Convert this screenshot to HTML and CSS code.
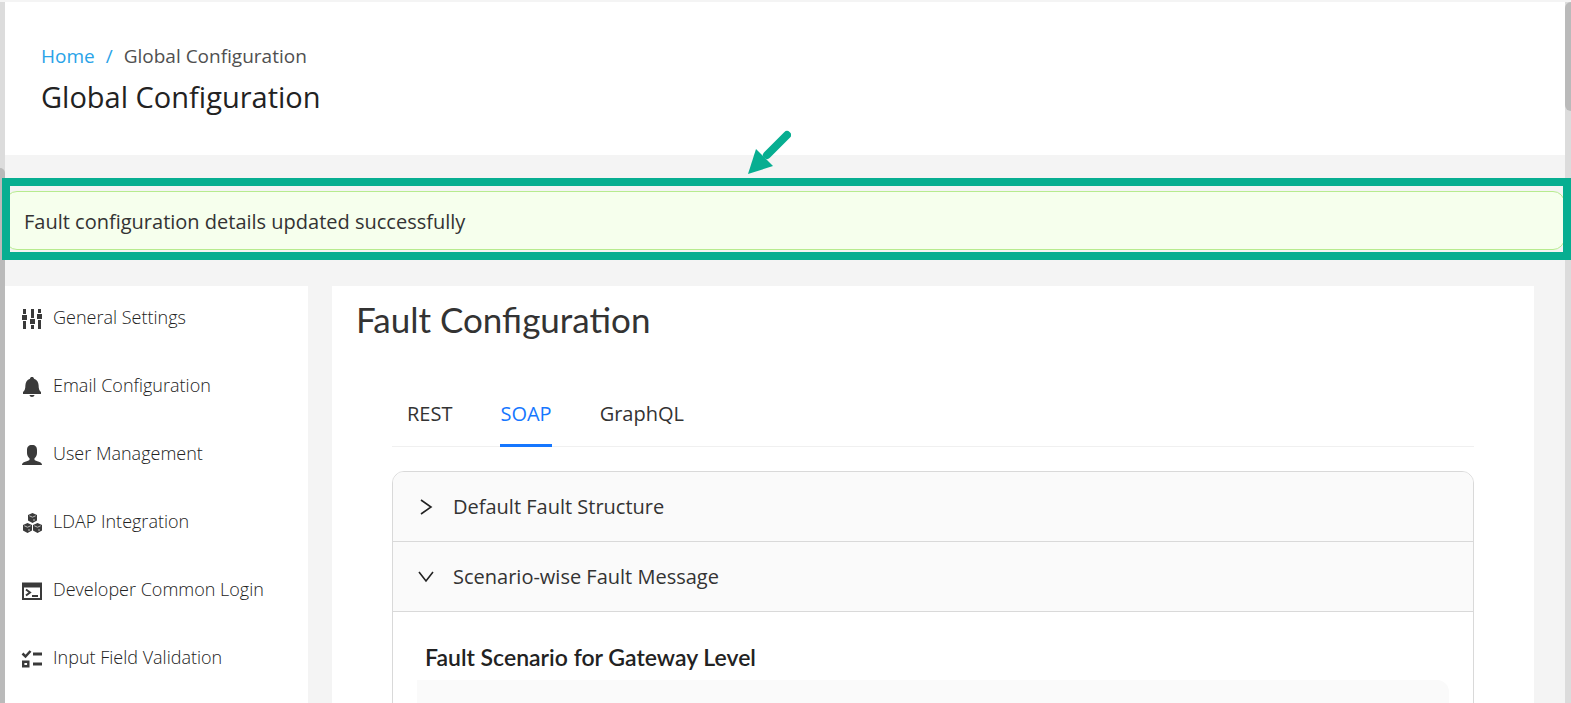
FILE: index.html
```html
<!DOCTYPE html>
<html lang="en">
<head>
<meta charset="UTF-8">
<meta name="viewport" content="width=device-width, initial-scale=1.0">
<title>Global Configuration</title>
<link rel="stylesheet" href="styles.css">
</head>
<body>

<div class="page">
    <!-- Left scroll rail -->
    <div class="rail rail-left"><div class="thumb"></div></div>

    <div class="content">
        <!-- Page header -->
        <header class="page-header">
            <nav class="breadcrumb" aria-label="Breadcrumb">
                <a href="#">Home</a>
                <span class="separator">/</span>
                <span>Global Configuration</span>
            </nav>
            <h1>Global Configuration</h1>
        </header>

        <!-- Success message -->
        <div class="alert-area">
            <div class="alert" role="status">Fault configuration details updated successfully</div>
            <div class="highlight"></div>
            <svg class="arrow" width="44" height="46" viewBox="0 0 44 46" aria-hidden="true">
                <path d="M40 6 L20 26" stroke="#07ae91" stroke-width="8" stroke-linecap="round"/>
                <path d="M1 45 L9 20 L26 37 Z" fill="#07ae91"/>
            </svg>
        </div>

        <div class="columns">
            <!-- Side menu -->
            <nav class="side-menu" aria-label="Settings">
                <a href="#">
                    <svg width="22" height="22" viewBox="0 0 22 22" fill="#3a3a3a" aria-hidden="true">
                        <path d="M2 1h3v5H2zM1 7h5v5H1zM2 13h3v8H2zM10 1h3v9h-3zM9 11h5v5H9zM10 17h3v4h-3zM17 1h3v4h-3zM16 6h5v5h-5zM17 12h3v9h-3z"/>
                    </svg>
                    <span>General Settings</span>
                </a>
                <a href="#">
                    <svg width="22" height="22" viewBox="0 0 22 22" fill="#3a3a3a" aria-hidden="true">
                        <path d="M11 1c1.200 0 1.900.7 2 1.700 3 1 4.500 3.600 4.600 6.600.1 3.500.4 5.200 2.400 6.700v2H2v-2c2-1.500 2.300-3.200 2.400-6.700C4.500 6.300 6 3.700 9 2.700 9.100 1.700 9.800 1 11 1zM8.500 19h5c-.2 1.300-1.200 2-2.500 2s-2.300-.7-2.500-2z"/>
                    </svg>
                    <span>Email Configuration</span>
                </a>
                <a href="#">
                    <svg width="22" height="22" viewBox="0 0 22 22" fill="#3a3a3a" aria-hidden="true">
                        <path d="M11 1c3.500 0 5 2 5 5v3c0 2-1 4-2.500 5.200V16c1 .8 3 1.200 5 2 1.700.7 2.500 1.600 2.500 3H1c0-1.400.8-2.300 2.500-3 2-.8 4-1.200 5-2v-1.800C7 13 6 11 6 9V6c0-3 1.500-5 5-5z"/>
                    </svg>
                    <span>User Management</span>
                </a>
                <a href="#">
                    <svg width="22" height="22" viewBox="0 0 22 22" aria-hidden="true">
                        <g fill="#3a3a3a">
                            <path d="M11.500 1l4.500 2v5.500l-4.500 2.500L7 8.500V3z"/>
                            <path d="M6.500 11l4.500 2v5.500L6.500 21 2 18.500V13z"/>
                            <path d="M16.500 11l4.500 2v5.500L16.500 21 12 18.500V13z"/>
                        </g>
                        <path d="M8.300 3.800l3.200 1.400 3.200-1.400M13 9V7M3.300 13.800l3.200 1.400 3.200-1.400M8 19v-2M13.300 13.800l3.200 1.400 3.200-1.400M18 19v-2" fill="none" stroke="#bbb" stroke-width="1"/>
                    </svg>
                    <span>LDAP Integration</span>
                </a>
                <a href="#">
                    <svg width="22" height="22" viewBox="0 0 22 22" fill="none" stroke="#3a3a3a" stroke-width="2" aria-hidden="true">
                        <path d="M2 4h18v15H2z"/>
                        <path d="M1 5h20" stroke-width="5"/>
                        <path d="M5 9.500l4 3-4 3M11 16h6"/>
                    </svg>
                    <span>Developer Common Login</span>
                </a>
                <a href="#">
                    <svg width="22" height="22" viewBox="0 0 22 22" fill="none" stroke="#3a3a3a" aria-hidden="true">
                        <path d="M1.500 5.500l3 3 5-5.500" stroke-width="2.500"/>
                        <path d="M12 6h9M12 16h9" stroke-width="3"/>
                        <path d="M2.200 13.700h5.100v4.600H2.200z" stroke-width="2.400"/>
                    </svg>
                    <span>Input Field Validation</span>
                </a>
            </nav>

            <!-- Fault configuration panel -->
            <main class="panel">
                <h2>Fault Configuration</h2>

                <div class="tabs" role="tablist">
                    <button type="button" role="tab">REST</button>
                    <button type="button" role="tab" class="active" aria-selected="true">SOAP</button>
                    <button type="button" role="tab">GraphQL</button>
                </div>

                <div class="collapse">
                    <button type="button" class="collapse-header" aria-expanded="false">
                        <svg width="18" height="18" viewBox="0 0 18 18" aria-hidden="true"><path d="M4 2l10 7-10 7"/></svg>
                        Default Fault Structure
                    </button>
                    <button type="button" class="collapse-header" aria-expanded="true">
                        <svg width="18" height="18" viewBox="0 0 18 18" aria-hidden="true"><path d="M2 4l7 9 7-9"/></svg>
                        Scenario-wise Fault Message
                    </button>
                    <div class="collapse-body">
                        <h3>Fault Scenario for Gateway Level</h3>
                        <div class="scenario-box"></div>
                    </div>
                </div>
            </main>
        </div>
    </div>

    <!-- Right scroll rail -->
    <div class="rail rail-right"><div class="thumb"></div></div>
</div>

</body>
</html>
```
FILE: styles.css
```css
* {
    box-sizing: border-box;
}
body {
    margin: 0;
    background-color: #f4f4f4;
    color: #333;
    font-family: "Open Sans", "Noto Sans", sans-serif;
}
h1, h2, h3 {
    margin: 0;
    color: #222;
    font-weight: 400;
}
button {
    font-family: inherit;
    color: inherit;
    border: 0;
    cursor: pointer;
}

/* PAGE FRAME */
.page {
    display: flex;
    height: 100vh;
    padding-top: 2px;
    overflow: hidden;
}
.content {
    flex: 1;
    min-width: 0;
}
.rail {
    background-color: #dcdcdc;
}
.thumb {
    background-color: #bababa;
}
.rail-left {
    width: 5px;
    padding-top: 166px;
}
.rail-left .thumb {
    height: 100%;
    border-radius: 0 6px 0 0;
}
.rail-right {
    width: 6px;
}
.rail-right .thumb {
    height: 109px;
    border-radius: 6px 0 0 6px;
}

/* HEADER */
.page-header {
    padding: 40px 36px 36px;
    background-color: #fff;
}
.breadcrumb {
    display: flex;
    gap: 11px;
    font-size: 19px;
    line-height: 28px;
    color: #505050;
}
.breadcrumb a,
.breadcrumb .separator {
    color: #29a3e8;
    text-decoration: none;
}
.page-header h1 {
    padding-top: 5px;
    font-size: 29px;
    line-height: 44px;
}

/* ALERT */
.alert-area {
    position: relative;
    padding: 36px 0;
}
.alert {
    padding: 15px 18px 13px;
    background-color: #f6ffed;
    border: 1px solid #b7eb8f;
    border-radius: 12px;
    font-size: 20px;
    line-height: 29px;
}
.highlight {
    position: absolute;
    top: 23px;
    right: -6px;
    bottom: 26px;
    left: -3px;
    border: 8px solid #07ae91;
}
.arrow {
    position: absolute;
    top: -26px;
    left: 742px;
}

/* COLUMNS */
.columns {
    display: flex;
    gap: 24px;
    padding-right: 31px;
}

/* SIDE MENU */
.side-menu {
    flex: 0 0 303px;
    min-height: 600px;
    background-color: #fff;
}
.side-menu a {
    display: flex;
    align-items: center;
    gap: 10px;
    height: 68px;
    padding: 0 0 6px 16px;
    color: #222;
    font-size: 18px;
    font-weight: 300;
    text-decoration: none;
}
.side-menu svg {
    margin-top: 4px;
}

/* MAIN PANEL */
.panel {
    flex: 1;
    padding: 8px 60px;
    background-color: #fff;
}
.panel h2 {
    margin-left: -36px;
    color: #333;
    font-family: Lato, sans-serif;
    font-size: 35px;
    line-height: 50px;
}
.tabs {
    display: flex;
    gap: 48px;
    margin-top: 39px;
    padding-left: 15px;
    border-bottom: 1px solid #f0f0f0;
}
.tabs button {
    height: 64px;
    margin-bottom: -1px;
    padding: 0;
    background: none;
    border-bottom: 3px solid transparent;
    font-size: 20px;
}
.tabs .active {
    border-color: #1677ff;
    color: #1677ff;
}

/* COLLAPSE */
.collapse {
    min-height: 300px;
    margin-top: 24px;
    border: 1px solid #d9d9d9;
    border-radius: 12px;
    overflow: hidden;
}
.collapse-header {
    display: flex;
    align-items: center;
    gap: 18px;
    width: 100%;
    height: 70px;
    padding: 0 24px;
    background-color: #fafafa;
    border-bottom: 1px solid #d9d9d9;
    font-size: 20px;
}
.collapse-header svg {
    fill: none;
    stroke: #222;
    stroke-width: 1.6;
}
.collapse-body {
    padding: 25px 24px;
}
.collapse-body h3 {
    padding-left: 8px;
    font-family: Lato, sans-serif;
    font-size: 23px;
    font-weight: 600;
    line-height: 40px;
}
.scenario-box {
    height: 100px;
    margin-top: 3px;
    background-color: #fafafa;
    border-radius: 0 12px 0 0;
}
```
